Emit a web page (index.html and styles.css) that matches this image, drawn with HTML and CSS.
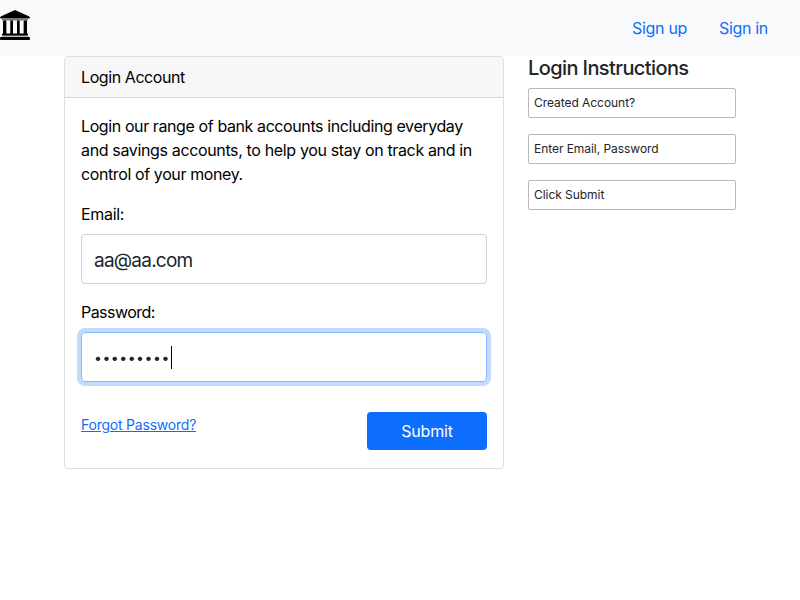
FILE: index.html
```html
<!DOCTYPE html>
<html lang="en">
<head>
<meta charset="utf-8">
<title>Login Account</title>
<link rel="stylesheet" href="styles.css">
</head>
<body>
<nav class="navbar">
  <a class="brand" href="#" aria-label="Home">
    <svg width="30" height="30" viewBox="0 0 30 30">
      <path d="M15 0 28.800 6.200Q30 6.800 30 7.600 30 8.500 29 8.500H1Q0 8.500 0 7.600 0 6.800 1.200 6.200Z"/>
      <path d="M2 8.500h26v1.300q0 .7-.8.7H2.800q-.8 0-.8-.7z" fill="#777"/>
      <path d="M3 10.500h3v13.500h-3zM10.300 10.500h2.700v13.500h-2.700zM17 10.500h2.700v13.500h-2.700zM24 10.500h3v13.500h-3z"/>
      <path d="M6 10.500h.8v13.500h-.8zM23.200 10.500h.8v13.500h-.8z" fill="#888"/>
      <rect x="2" y="23.500" width="26" height="2.300" rx=".8"/>
      <path d="M1.500 25.800h27v1.200h-27z" fill="#bbb"/>
      <rect x="0" y="27" width="30" height="3" rx="1"/>
    </svg>
  </a>
  <div class="links"><a class="up" href="#">Sign up</a><a class="in" href="#">Sign in</a></div>
</nav>
<main class="container">
  <section class="card">
    <header class="card-header"><span class="title">Login Account</span></header>
    <div class="card-body">
      <p class="intro"><span class="l1">Login our range of bank accounts including everyday</span><br><span class="l2">and savings accounts, to help you stay on track and in</span><br><span class="l3">control of your money.</span></p>
      <div class="label"><span class="lb-email">Email:</span></div>
      <div class="field"><span class="email">aa@aa.com</span></div>
      <div class="label"><span class="lb-pass">Password:</span></div>
      <div class="field focused"><span class="dots">•••••••••</span><i class="caret"></i></div>
      <div class="actions"><a class="forgot" href="#">Forgot Password?</a><button class="submit"><span>Submit</span></button></div>
    </div>
  </section>
  <aside class="help">
    <h2><span>Login Instructions</span></h2>
    <div class="step"><span class="s1">Created Account?</span></div>
    <div class="step"><span class="s2">Enter Email, Password</span></div>
    <div class="step"><span class="s3">Click Submit</span></div>
  </aside>
</main>
</body>
</html>
```
FILE: styles.css
```css
* { box-sizing: border-box; }
body { margin: 0; background: #fff; color: #212529; font: 16px/24px Inter, "Liberation Sans", sans-serif; }
a { color: #0d6efd; }
.navbar { display: flex; justify-content: space-between; height: 56px; background: #f8f9fa; }
.brand { margin-top: 10px; height: 30px; }
.brand svg { display: block; }
.links { display: flex; gap: 32px; padding: 16px 32px 0 0; }
.links a { text-decoration: none; white-space: nowrap; }
.up { width: 55px; letter-spacing: -.3px; }
.in { width: 49px; letter-spacing: -.35px; }
.container { display: flex; gap: 24px; align-items: flex-start; padding: 0 64px; }
.card { width: 440px; height: 413px; border: 1px solid #dfdfdf; border-radius: 4px; color: #000; white-space: nowrap; }
.card-header { height: 41px; padding: 8px 16px; border-bottom: 1px solid #d8d8d8; background: #f7f7f7; border-radius: 3px 3px 0 0; }
.card-body { padding: 16px; }
.intro { margin: 0 0 16px; }
.label { height: 32px; }
.title { letter-spacing: -.42px; }
.l1 { letter-spacing: -.4px; }
.l2 { letter-spacing: -.355px; }
.l3 { letter-spacing: -.39px; }
.lb-email { letter-spacing: -.3px; }
.lb-pass { letter-spacing: -.55px; }
.field { display: flex; align-items: center; height: 50px; margin-bottom: 16px; padding: 3px 12px 0; border: 1px solid #ced4da; border-radius: 4px; font-size: 19px; color: #212529; }
.email { letter-spacing: -.78px; }
.focused { border-color: #86b7fe; box-shadow: 0 0 0 4px #c2dbfe; padding-top: 0; }
.dots { width: 77px; padding-top: 2px; font-size: 14px; letter-spacing: .55px; }
.caret { width: 1px; height: 23px; background: #000; }
.actions { display: flex; justify-content: space-between; margin-top: 30px; }
.forgot { font-size: 14px; line-height: 26px; letter-spacing: -.22px; }
.submit { width: 120px; height: 38px; border: 0; border-radius: 4px; background: #0d6efd; color: #fff; font: 16px/24px Inter, sans-serif; letter-spacing: -.15px; }
.help { width: 208px; }
.help h2 { height: 24px; margin: 0 0 8px; font-size: 20px; font-weight: 500; line-height: 24px; white-space: nowrap; letter-spacing: -.6px; }
.step { height: 30px; margin-bottom: 16px; padding: 0 5px; border: 1px solid #b8b8b8; border-radius: 2px; font-size: 12px; line-height: 28px; letter-spacing: -.05px; }
```
